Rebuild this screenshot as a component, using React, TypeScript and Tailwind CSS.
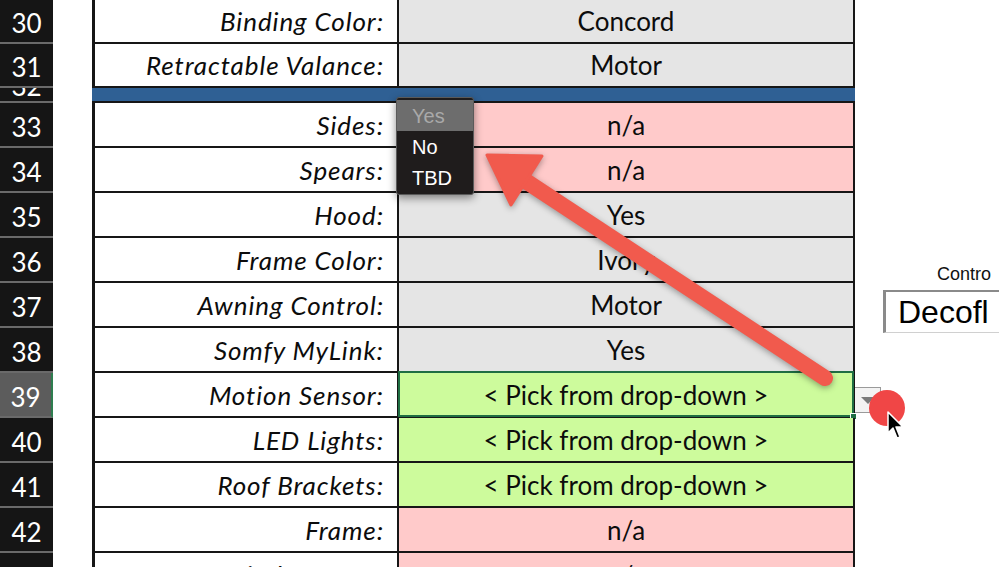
import React from 'react';

type Fill = 'grey' | 'pink' | 'green';

type RowData = {
  n: number;
  label: string;
  value: string;
  fill: Fill;
  selected?: boolean;
};

const FILL: Record<Fill, string> = {
  grey: 'bg-[#e5e5e5]',
  pink: 'bg-[#ffcaca]',
  green: 'bg-[#cdfb9c]',
};

const TOP: RowData[] = [
  { n: 30, label: 'Binding Color:', value: 'Concord', fill: 'grey' },
  { n: 31, label: 'Retractable Valance:', value: 'Motor', fill: 'grey' },
];

const BOTTOM: RowData[] = [
  { n: 33, label: 'Sides:', value: 'n/a', fill: 'pink' },
  { n: 34, label: 'Spears:', value: 'n/a', fill: 'pink' },
  { n: 35, label: 'Hood:', value: 'Yes', fill: 'grey' },
  { n: 36, label: 'Frame Color:', value: 'Ivory', fill: 'grey' },
  { n: 37, label: 'Awning Control:', value: 'Motor', fill: 'grey' },
  { n: 38, label: 'Somfy MyLink:', value: 'Yes', fill: 'grey' },
  { n: 39, label: 'Motion Sensor:', value: '< Pick from drop-down >', fill: 'green', selected: true },
  { n: 40, label: 'LED Lights:', value: '< Pick from drop-down >', fill: 'green' },
  { n: 41, label: 'Roof Brackets:', value: '< Pick from drop-down >', fill: 'green' },
  { n: 42, label: 'Frame:', value: 'n/a', fill: 'pink' },
  { n: 43, label: 'Window Type:', value: 'n/a', fill: 'pink' },
];

function Row({ row, tall }: { row: RowData; tall?: boolean }) {
  return (
    <div className={`flex shrink-0 ${tall ? 'h-[45px]' : 'h-[44px]'}`}>
      <div
        className={`w-[53px] shrink-0 flex items-center justify-center pt-[5px] text-[26px] text-white border-b-2 border-[#6a6a6a] ${
          row.selected ? 'bg-[#5c5c5c] border-r-2 border-r-[#2e7d4f]' : 'bg-[#151515]'
        }`}
      >
        {row.n}
      </div>
      <div className="w-[39px] shrink-0" />
      <div className="w-[305px] shrink-0 flex items-center justify-end pr-[13px] pt-[1px] italic text-[26px] tracking-[0.9px] text-[#0c0c0c] whitespace-nowrap border-l-[3px] border-b-2 border-[#161616]">
        {row.label}
      </div>
      <div
        className={`relative w-[458px] shrink-0 flex items-center justify-center pt-[1px] text-[26px] text-[#0c0c0c] whitespace-nowrap border-x-2 border-b-2 border-[#161616] ${FILL[row.fill]}`}
      >
        {row.value}
        {row.selected && (
          <>
            <div className="absolute -left-[1px] -top-[2px] -right-[1px] -bottom-[1px] border-2 border-[#1f6e43]" />
            <div className="absolute -right-[4px] -bottom-[4px] w-[7px] h-[7px] bg-[#1f6e43] border border-white" />
          </>
        )}
      </div>
    </div>
  );
}

function Arrow() {
  return (
    <svg
      className="absolute left-0 top-0 drop-shadow-[0_2px_3px_rgba(0,0,0,0.35)]"
      width="999"
      height="567"
      viewBox="0 0 999 567"
    >
      <line x1="518" y1="176" x2="825" y2="378" stroke="#f15a4d" strokeWidth="16" strokeLinecap="round" />
      <polygon points="487,155 542,156 511,205" fill="#f15a4d" strokeLinejoin="round" stroke="#f15a4d" strokeWidth="3" />
    </svg>
  );
}

function Pointer() {
  return (
    <svg className="absolute left-[886px] top-[411px]" width="20" height="30" viewBox="0 0 20 30">
      <path d="M2 1 L2 22 L7 17 L11 27 L14 26 L10 16 L17 16 Z" fill="#000" stroke="#fff" strokeWidth="1.5" strokeLinejoin="round" />
    </svg>
  );
}

export default function App() {
  return (
    <div className="relative w-[999px] h-[567px] overflow-hidden bg-white" style={{ fontFamily: 'Lato, "Open Sans", sans-serif' }}>
      <div className="flex flex-col">
        {TOP.map(r => (
          <Row key={r.n} row={r} />
        ))}
        <div className="flex shrink-0 h-[15px]">
          <div className="w-[53px] shrink-0 overflow-hidden bg-[#151515] border-b-2 border-[#6a6a6a] flex justify-center">
            <span className="text-[26px] text-white leading-[10px] -mt-[7px]">32</span>
          </div>
          <div className="w-[39px] shrink-0" />
          <div className="w-[763px] shrink-0 bg-[#2f6094] border-b-2 border-[#161616]" />
        </div>
        {BOTTOM.map(r => (
          <Row key={r.n} row={r} tall />
        ))}
      </div>

      {/* validation list open on row 33 */}
      <div className="absolute left-[396px] top-[97px] w-[78px] h-[98px] bg-[#1f1c1c] border border-[#5a5a5a] rounded-[3px] shadow-[0_3px_8px_rgba(0,0,0,0.45)] py-[2px] text-[20px]" style={{ fontFamily: '"Liberation Sans", Arial, sans-serif' }}>
        <div className="h-[31px] bg-[#6d6d6d] text-[#a9a9a9] pl-[15px] flex items-center">Yes</div>
        <div className="h-[31px] text-white pl-[15px] flex items-center">No</div>
        <div className="h-[31px] text-white pl-[15px] flex items-center">TBD</div>
      </div>

      {/* in-cell dropdown button */}
      <div className="absolute left-[855px] top-[387px] w-[26px] h-[26px] bg-[#f3f3f3] border border-[#9a9a9a] border-l-0 flex items-center justify-center">
        <div className="w-0 h-0 border-l-[7px] border-r-[7px] border-t-[7px] border-l-transparent border-r-transparent border-t-[#7a7a7a]" />
      </div>

      <Arrow />

      <div className="absolute left-[869px] top-[390px] w-[36px] h-[36px] rounded-full bg-[#f04646]" />
      <Pointer />

      {/* form control to the right */}
      <div className="absolute left-[937px] top-[261px] text-[18px] text-[#111] whitespace-nowrap" style={{ fontFamily: '"Liberation Sans", Arial, sans-serif' }}>
        Contro
      </div>
      <div className="absolute left-[883px] top-[290px] w-[130px] h-[43px] border-l-[3px] border-t-2 border-[#8a8a8a] border-b border-b-[#d0d0d0] bg-white pl-[12px] flex items-center text-[32px] text-black whitespace-nowrap" style={{ fontFamily: '"Liberation Sans", Arial, sans-serif' }}>
        Decofl
      </div>
    </div>
  );
}
